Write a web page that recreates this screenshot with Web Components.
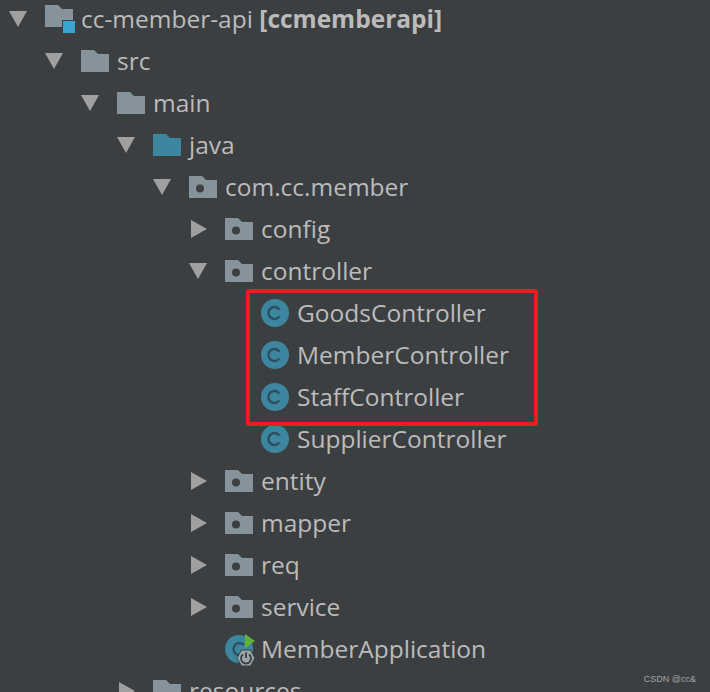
<!DOCTYPE html>
<html>
<head>
<meta charset="utf-8">
<style>
    html, body { margin: 0; height: 100%; background: #3c3f41; overflow: hidden; }
</style>
</head>
<body>
<project-tree>
    <tree-row level="0" open icon="module">cc-member-api <b>[ccmemberapi]</b></tree-row>
    <tree-row level="1" open icon="folder">src</tree-row>
    <tree-row level="2" open icon="folder">main</tree-row>
    <tree-row level="3" open icon="source">java</tree-row>
    <tree-row level="4" open icon="package">com.cc.member</tree-row>
    <tree-row level="5" closed icon="package">config</tree-row>
    <tree-row level="5" open icon="package">controller</tree-row>
    <tree-row level="6" icon="class">GoodsController</tree-row>
    <tree-row level="6" icon="class">MemberController</tree-row>
    <tree-row level="6" icon="class">StaffController</tree-row>
    <tree-row level="6" icon="class">SupplierController</tree-row>
    <tree-row level="5" closed icon="package">entity</tree-row>
    <tree-row level="5" closed icon="package">mapper</tree-row>
    <tree-row level="5" closed icon="package">req</tree-row>
    <tree-row level="5" closed icon="package">service</tree-row>
    <tree-row level="5" icon="spring">MemberApplication</tree-row>
    <tree-row level="3" closed icon="folder">resources</tree-row>
</project-tree>
<script>
const FOLDER = 'M0 0H13L17 4H28V22H0Z';

const ICONS = {
    folder: `<svg width="28" height="22" viewBox="0 0 28 22"><path d="${FOLDER}" fill="#87939a"/></svg>`,
    source: `<svg width="28" height="22" viewBox="0 0 28 22"><path d="${FOLDER}" fill="#3d86a0"/></svg>`,
    package: `<svg width="28" height="22" viewBox="0 0 28 22"><path d="${FOLDER}" fill="#87939a"/><circle cx="11" cy="12.5" r="4" fill="#3c3f41"/></svg>`,
    module: `<svg width="30" height="28" viewBox="0 0 30 28"><path d="${FOLDER}" fill="#87939a"/><rect x="17" y="15" width="13" height="13" fill="#3c3f41"/><rect x="18" y="16" width="12" height="12" fill="#3aa5d0"/></svg>`,
    class: `<svg width="28" height="28" viewBox="0 0 28 28"><circle cx="14" cy="14" r="14" fill="#3d86a0"/><path d="M18.4 10.6A6 6 0 1 0 18.4 17.4" fill="none" stroke="#2c4f5f" stroke-width="2.4"/></svg>`,
    spring: `<svg style="margin-top:-1px" width="32" height="33" viewBox="0 -1 32 33">
        <circle cx="14" cy="14" r="14" fill="#3d86a0"/>
        <path d="M19 10A6 6 0 1 0 19 18" fill="none" stroke="#2c4f5f" stroke-width="2.4"/>
        <path d="M20 -1L30 6L20 13Z" fill="#5fb13a"/>
        <path d="M16.500 15H25.500L30 23L25.500 31H16.500L12 23Z" fill="#9aa5ab" stroke="#3c3f41" stroke-width="1"/>
        <path d="M18 19.500A5 5 0 1 0 24 19.500" fill="none" stroke="#3c3f41" stroke-width="1.800"/>
        <path d="M21 17.500V23" stroke="#3c3f41" stroke-width="1.800"/>
    </svg>`
};

class TreeRow extends HTMLElement {
    constructor() {
        super();
        this.attachShadow({ mode: 'open' });
    }

    connectedCallback() {
        const level = Number(this.getAttribute('level'));
        const icon = this.getAttribute('icon');
        let arrow = '';
        if (this.hasAttribute('open')) {
            arrow = '<svg width="18" height="16" viewBox="0 0 18 16"><path d="M0 0H18L9 16Z" fill="#a0a0a0"/></svg>';
        } else if (this.hasAttribute('closed')) {
            arrow = '<svg style="margin-left:2px" width="16" height="18" viewBox="0 0 16 18"><path d="M0 0L16 9L0 18Z" fill="#a0a0a0"/></svg>';
        }

        this.shadowRoot.innerHTML = `
            <style>
                :host {
                    display: flex;
                    align-items: center;
                    height: 42px;
                    padding-left: ${9 + level * 36}px;
                    font: 24.5px "Open Sans", "Noto Sans", sans-serif;
                    color: #bbbbbb;
                    white-space: nowrap;
                }
                .arrow {
                    flex: none;
                    width: 36px;
                    display: flex;
                    align-items: center;
                }
                .icon {
                    flex: none;
                    width: 28px;
                    height: 22px;
                    display: flex;
                    align-items: flex-start;
                    margin-right: 8px;
                }
                .icon.tall { height: 28px; }
                .icon svg { display: block; flex: none; }
                .label { position: relative; top: -1px; }
                ::slotted(b) { font-weight: 700; }
            </style>
            <span class="arrow">${arrow}</span>
            <span class="icon ${icon === 'folder' || icon === 'source' || icon === 'package' ? '' : 'tall'}">${ICONS[icon]}</span>
            <span class="label"><slot></slot></span>
        `;
    }
}

class ProjectTree extends HTMLElement {
    constructor() {
        super();
        this.attachShadow({ mode: 'open' });
        this.shadowRoot.innerHTML = `
            <style>
                :host {
                    display: block;
                    position: relative;
                    height: 692px;
                    overflow: hidden;
                    background: #3c3f41;
                }
                .rows { margin-top: -2px; }
                .mark {
                    position: absolute;
                    left: 246px;
                    top: 289px;
                    width: 284px;
                    height: 129px;
                    border: 4px solid #ed1c24;
                    border-radius: 3px;
                }
                .csdn {
                    position: absolute;
                    right: 14px;
                    bottom: 8px;
                    font: 9px "Liberation Sans", sans-serif;
                    color: #a3a5a6;
                }
            </style>
            <div class="rows"><slot></slot></div>
            <div class="mark"></div>
            <div class="csdn">CSDN @cc&amp;</div>
        `;
    }
}

customElements.define('tree-row', TreeRow);
customElements.define('project-tree', ProjectTree);
</script>
</body>
</html>
